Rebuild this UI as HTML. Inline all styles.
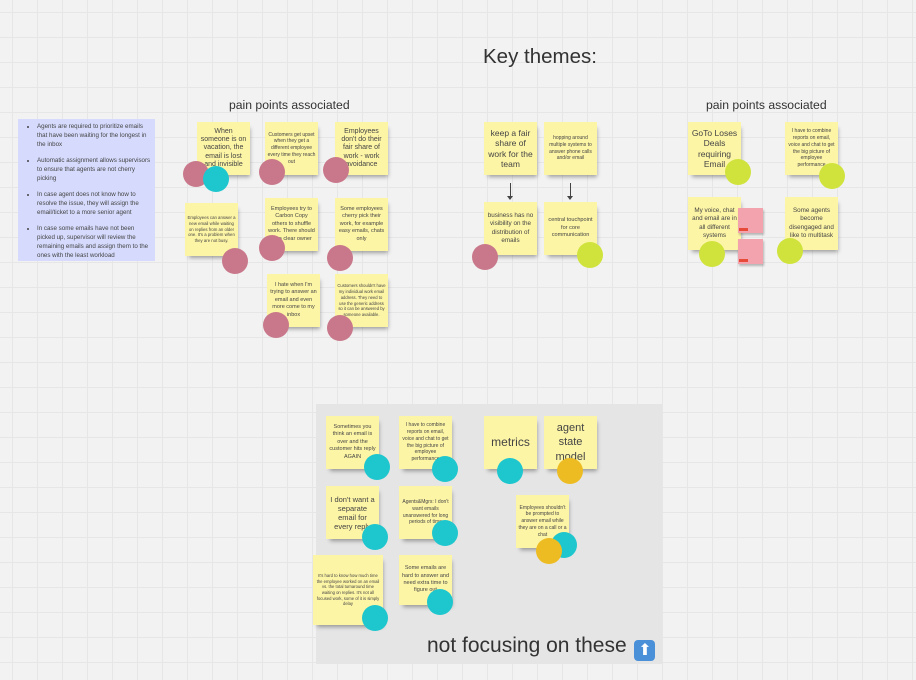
<!DOCTYPE html>
<html><head><meta charset="utf-8"><style>
*{margin:0;padding:0;box-sizing:border-box}
body{width:916px;height:680px;overflow:hidden;position:relative;background:#f2f2f2;
background-image:linear-gradient(#e6e6e6 1px,transparent 1px),linear-gradient(90deg,#e6e6e6 1px,transparent 1px);
background-size:25px 25px;background-position:12px 12px;font-family:"Liberation Sans",sans-serif;color:#333}
.a{position:absolute}
.n{position:absolute;background:#fdf5a6;width:53px;height:53px;display:flex;align-items:center;justify-content:center;text-align:center;font-size:5px;line-height:1.35;padding:2px;color:#444;box-shadow:2px 4px 4px -2px rgba(0,0,0,.35)}
.m{font-size:6.3px}
.l{font-size:8.5px;line-height:1.2}
.c{position:absolute;width:26px;height:26px;border-radius:50%;margin:-13px 0 0 -13px}
.p{background:#c8788a}.t{background:#1ec6ce}.g{background:#cfe33c}.y{background:#ecbc22}
.h{position:absolute;font-size:12.2px;color:#333}
</style></head><body>
<div class="a" style="left:316px;top:404px;width:346px;height:260px;background:#e5e5e5"></div>
<div class="a" style="left:483px;top:45px;font-size:20.5px;color:#333">Key themes:</div>
<div class="h" style="left:229px;top:98px">pain points associated</div>
<div class="h" style="left:706px;top:98px">pain points associated</div>

<div class="a" style="left:18px;top:119px;width:137px;height:142px;background:#d6dbfd;font-size:6.2px;line-height:1.45;color:#444;padding:4px 4px 0 12px">
<ul style="padding-left:7px">
<li style="margin-bottom:7px">Agents are required to prioritize emails that have been waiting for the longest in the inbox</li>
<li style="margin-bottom:7px">Automatic assignment allows supervisors to ensure that agents are not cherry picking</li>
<li style="margin-bottom:7px">In case agent does not know how to resolve the issue, they will assign the email/ticket to a more senior agent</li>
<li>In case some emails have not been picked up, supervisor will review the remaining emails and assign them to the ones with the least workload</li></ul></div>

<div class="n l" style="left:197px;top:122px;font-size:7px">When someone is on vacation, the email is lost and invisible</div>
<div class="n" style="left:265px;top:122px">Customers get upset when they get a different employee every time they reach out</div>
<div class="n l" style="left:335px;top:122px;font-size:7px">Employees don't do their fair share of work - work avoidance</div>
<div class="n" style="left:185px;top:203px;font-size:4.3px">Employees can answer a new email while waiting on replies from an older one. It's a problem when they are not busy.</div>
<div class="n m" style="left:265px;top:198px;font-size:5.5px">Employees try to Carbon Copy others to shuffle work. There should be a clear owner</div>
<div class="n m" style="left:335px;top:198px;font-size:5.5px">Some employees cherry pick their work, for example easy emails, chats only</div>
<div class="n m" style="left:267px;top:274px;font-size:5.5px">I hate when I'm trying to answer an email and even more come to my inbox</div>
<div class="n" style="left:335px;top:274px;font-size:4.2px">Customers shouldn't have my individual work email address. They need to use the generic address so it can be answered by someone available.</div>
<div class="c p" style="left:196px;top:174px"></div><div class="c t" style="left:216px;top:179px"></div>
<div class="c p" style="left:272px;top:172px"></div><div class="c p" style="left:336px;top:170px"></div>
<div class="c p" style="left:235px;top:261px"></div><div class="c p" style="left:272px;top:248px"></div>
<div class="c p" style="left:340px;top:258px"></div><div class="c p" style="left:276px;top:325px"></div>
<div class="c p" style="left:340px;top:328px"></div>

<div class="n l" style="left:484px;top:122px">keep a fair share of work for the team</div>
<div class="n" style="left:544px;top:122px">hopping around multiple systems to answer phone calls and/or email</div>
<div class="n m" style="left:484px;top:202px">business has no visibility on the distribution of emails</div>
<div class="n" style="left:544px;top:202px;font-size:5.6px">central touchpoint for core communication</div>
<div class="a" style="left:510px;top:183px;width:1px;height:14px;background:#444"></div>
<div class="a" style="left:507px;top:196px;border:3px solid transparent;border-top:4px solid #444"></div>
<div class="a" style="left:570px;top:183px;width:1px;height:14px;background:#444"></div>
<div class="a" style="left:567px;top:196px;border:3px solid transparent;border-top:4px solid #444"></div>
<div class="c p" style="left:485px;top:257px"></div><div class="c g" style="left:590px;top:255px"></div>

<div class="n l" style="left:688px;top:122px">GoTo Loses Deals requiring Email</div>
<div class="n" style="left:785px;top:122px">I have to combine reports on email, voice and chat to get the big picture of employee performance</div>
<div class="n m" style="left:688px;top:197px">My voice, chat and email are in all different systems</div>
<div class="n m" style="left:785px;top:197px">Some agents become disengaged and like to multitask</div>
<div class="a" style="left:738px;top:208px;width:25px;height:25px;background:#f2a3ad;box-shadow:1px 2px 2px rgba(0,0,0,.25)"><div style="position:absolute;left:1px;bottom:2px;width:9px;height:3px;background:#e84a3a"></div></div>
<div class="a" style="left:738px;top:239px;width:25px;height:25px;background:#f2a3ad;box-shadow:1px 2px 2px rgba(0,0,0,.25)"><div style="position:absolute;left:1px;bottom:2px;width:9px;height:3px;background:#e84a3a"></div></div>
<div class="c g" style="left:738px;top:172px"></div><div class="c g" style="left:832px;top:176px"></div>
<div class="c g" style="left:712px;top:254px"></div><div class="c g" style="left:790px;top:251px"></div>

<div class="n m" style="left:326px;top:416px;font-size:5.5px">Sometimes you think an email is over and the customer hits reply AGAIN</div>
<div class="n" style="left:399px;top:416px">I have to combine reports on email, voice and chat to get the big picture of employee performance</div>
<div class="n" style="left:484px;top:416px;font-size:12px">metrics</div>
<div class="n" style="left:544px;top:416px;font-size:11px;line-height:1.3">agent state model</div>
<div class="n l" style="left:326px;top:486px;font-size:7.5px">I don't want a separate email for every reply</div>
<div class="n" style="left:399px;top:486px">Agents&amp;Mgrs: I don't want emails unanswered for long periods of time</div>
<div class="n" style="left:516px;top:495px">Employees shouldn't be prompted to answer email while they are on a call or a chat</div>
<div class="n" style="left:313px;top:555px;width:70px;height:70px;font-size:4.2px">It's hard to know how much time the employee worked on an email vs. the total turnaround time waiting on replies. It's not all focused work, some of it is simply delay</div>
<div class="n m" style="left:399px;top:555px;height:50px;font-size:5.5px">Some emails are hard to answer and need extra time to figure out</div>
<div class="c t" style="left:377px;top:467px"></div><div class="c t" style="left:445px;top:469px"></div>
<div class="c t" style="left:510px;top:471px"></div><div class="c y" style="left:570px;top:471px"></div>
<div class="c t" style="left:375px;top:537px"></div><div class="c t" style="left:445px;top:533px"></div>
<div class="c t" style="left:564px;top:545px"></div><div class="c y" style="left:549px;top:551px"></div>
<div class="c t" style="left:375px;top:618px"></div><div class="c t" style="left:440px;top:602px"></div>
<div class="a" style="left:427px;top:634px;font-size:21px;color:#333;white-space:nowrap">not focusing on these <span style="display:inline-block;width:21px;height:21px;background:#4a90d9;border-radius:4px;vertical-align:-3px;color:#fff;font-size:16px;text-align:center;line-height:21px;margin-left:2px">⬆</span></div>
</body></html>
